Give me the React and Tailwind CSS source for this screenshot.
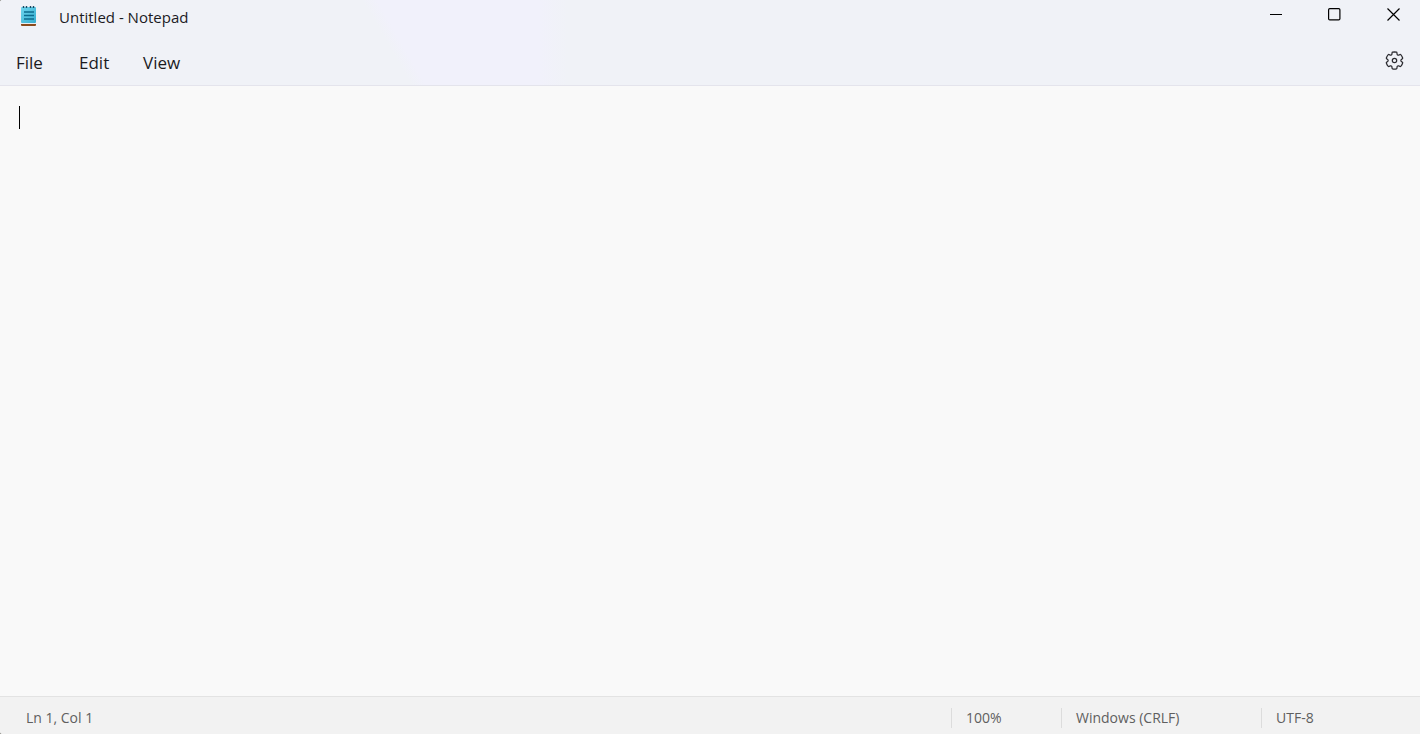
import React, { useState } from 'react';

const menus = [
  { label: 'File', width: 'w-[63px]' },
  { label: 'Edit', width: 'w-16' },
  { label: 'View', width: 'w-16' },
];

const NotepadIcon = () => (
  <svg width="16" height="20" viewBox="0 0 16 20" aria-hidden="true">
    <defs>
      <linearGradient id="page" x1="0" y1="0" x2="1" y2="1">
        <stop offset="0" stopColor="#6fd6ee" />
        <stop offset="1" stopColor="#35aed0" />
      </linearGradient>
    </defs>
    <rect x="0" y="16" width="15" height="4" rx="1" fill="#8a4b1c" />
    <rect x="0" y="16" width="15" height="2" fill="#e8eef2" />
    <rect x="0" y="1" width="15" height="16" rx="1" fill="url(#page)" />
    <path d="M3 6h10M3 9.5h10M3 13h10" stroke="#0c6c8f" strokeWidth="1.6" />
    <path d="M2.5 0v2M5.5 0v2M9.5 0v2M12.5 0v2" stroke="#1b4a63" strokeWidth="1.4" />
  </svg>
);

const SettingsIcon = () => (
  <svg width="21" height="21" viewBox="0 0 24 24" fill="none" stroke="currentColor" strokeWidth="1.4" aria-hidden="true">
    <path d="M12.0122 2.25C12.7462 2.25846 13.4773 2.34326 14.1937 2.50304C14.5064 2.57279 14.7403 2.83351 14.7758 3.15196L14.946 4.67881C15.0231 5.37986 15.615 5.91084 16.3206 5.91158C16.5103 5.91188 16.6979 5.87238 16.8732 5.79483L18.2738 5.17956C18.5651 5.05159 18.9055 5.12136 19.1229 5.35362C20.1351 6.43464 20.8889 7.73115 21.3277 9.14558C21.4223 9.45058 21.3134 9.78203 21.0564 9.9715L19.8149 10.8866C19.4607 11.1468 19.2516 11.56 19.2516 11.9995C19.2516 12.4389 19.4607 12.8521 19.8157 13.1129L21.0582 14.0283C21.3153 14.2177 21.4243 14.5492 21.3297 14.8543C20.8911 16.2685 20.1377 17.5649 19.1261 18.6461C18.9089 18.8783 18.5688 18.9483 18.2775 18.8206L16.8712 18.2045C16.4688 18.0284 16.0068 18.0542 15.6265 18.274C15.2463 18.4937 14.9933 18.8812 14.945 19.3177L14.7759 20.8444C14.741 21.1592 14.5122 21.4182 14.204 21.4915C12.7556 21.8361 11.2465 21.8361 9.79803 21.4915C9.48991 21.4182 9.26105 21.1592 9.22618 20.8444L9.05736 19.32C9.00777 18.8843 8.75434 18.498 8.37442 18.279C7.99451 18.06 7.5332 18.0343 7.1322 18.2094L5.72557 18.8256C5.43422 18.9533 5.09403 18.8833 4.87678 18.6509C3.86462 17.5685 3.11119 16.2705 2.6732 14.8548C2.57886 14.5499 2.68786 14.2186 2.94485 14.0293L4.18818 13.1133C4.54232 12.8531 4.75147 12.4399 4.75147 12.0005C4.75147 11.561 4.54232 11.1478 4.18771 10.8873L2.94516 9.97285C2.6878 9.78345 2.5787 9.45178 2.67337 9.14658C3.11212 7.73215 3.86594 6.43564 4.87813 5.35462C5.09559 5.12236 5.43594 5.05259 5.72724 5.18056L7.12762 5.79572C7.53056 5.97256 7.9938 5.94585 8.37577 5.72269C8.75609 5.50209 9.00929 5.11422 9.05817 4.67764L9.22824 3.15196C9.26376 2.83335 9.49786 2.57254 9.8108 2.50294C10.5281 2.34342 11.26 2.25865 12.0122 2.25Z" />
    <circle cx="12" cy="12" r="2.5" />
  </svg>
);

const WindowControls = () => (
  <div className="flex gap-[46px] pb-1">
    <button type="button" aria-label="Minimize">
      <svg width="13" height="13" viewBox="0 0 13 13">
        <path d="M1 6.5h12" stroke="#000" />
      </svg>
    </button>
    <button type="button" aria-label="Maximize">
      <svg width="13" height="13" viewBox="0 0 13 13">
        <rect x="0.6" y="0.6" width="11.3" height="11.3" rx="1.2" fill="none" stroke="#000" strokeWidth="1.2" />
      </svg>
    </button>
    <button type="button" aria-label="Close">
      <svg width="13" height="13" viewBox="0 0 13 13">
        <path d="M0.5 0.5l12 12M12.5 0.5l-12 12" stroke="#000" strokeWidth="1.2" />
      </svg>
    </button>
  </div>
);

const StatusBar = () => (
  <footer className="flex h-[38px] items-center border-t border-[#e3e3e3] bg-[#f2f2f2] pt-1 text-sm leading-5 text-[#5f5f5f]">
    <div className="flex-1 pl-[26px]">Ln 1, Col 1</div>
    <div className="w-[110px] border-l border-[#dcdcdc] pl-[14px]">100%</div>
    <div className="w-[200px] border-l border-[#dcdcdc] pl-[14px]">Windows (CRLF)</div>
    <div className="w-[159px] border-l border-[#dcdcdc] pl-[14px]">UTF-8</div>
  </footer>
);

const App = () => {
  const [text, setText] = useState('');

  return (
    <div className="h-screen bg-[#8f8f88] font-['Open_Sans','Noto_Sans',sans-serif]">
      <div className="flex h-full flex-col overflow-hidden rounded-l-[3px] bg-[#f9f9f9]">
        <header className="border-b border-[#e4e4ec] bg-[#f0f2f7] bg-[linear-gradient(90deg,transparent_38%,#f0f2f7_40%),linear-gradient(60deg,#f0f2f7_28%,#f1f1fb_29%)]">
          <div className="flex h-8 items-center pl-[21px] pr-5">
            <NotepadIcon />
            <h1 className="flex-1 pl-[22px] pt-[2px] text-[15px] leading-5 text-[#1b1b1f]">Untitled - Notepad</h1>
            <WindowControls />
          </div>
          <div className="flex h-[53px] items-center pl-4 pr-[15px] pt-2">
            <nav className="flex flex-1">
              {menus.map((menu) => (
                <button key={menu.label} type="button" className={`${menu.width} text-left text-[17px] leading-6 text-[#1b1b1f]`}>
                  {menu.label}
                </button>
              ))}
            </nav>
            <button type="button" aria-label="Settings" className="pb-1 text-[#2b2b30]">
              <SettingsIcon />
            </button>
          </div>
        </header>

        <main className="relative flex min-h-0 flex-1">
          <textarea
            aria-label="Document text"
            value={text}
            onChange={(e) => setText(e.target.value)}
            className="flex-1 resize-none bg-transparent px-[19px] py-5 text-[17px] leading-6 text-black outline-none"
          />
          {/* Caret of the empty document */}
          {text === '' && <span className="pointer-events-none absolute left-[19px] top-5 h-[23px] w-px bg-black"></span>}
        </main>

        <StatusBar />
      </div>
    </div>
  );
};

export default App;
